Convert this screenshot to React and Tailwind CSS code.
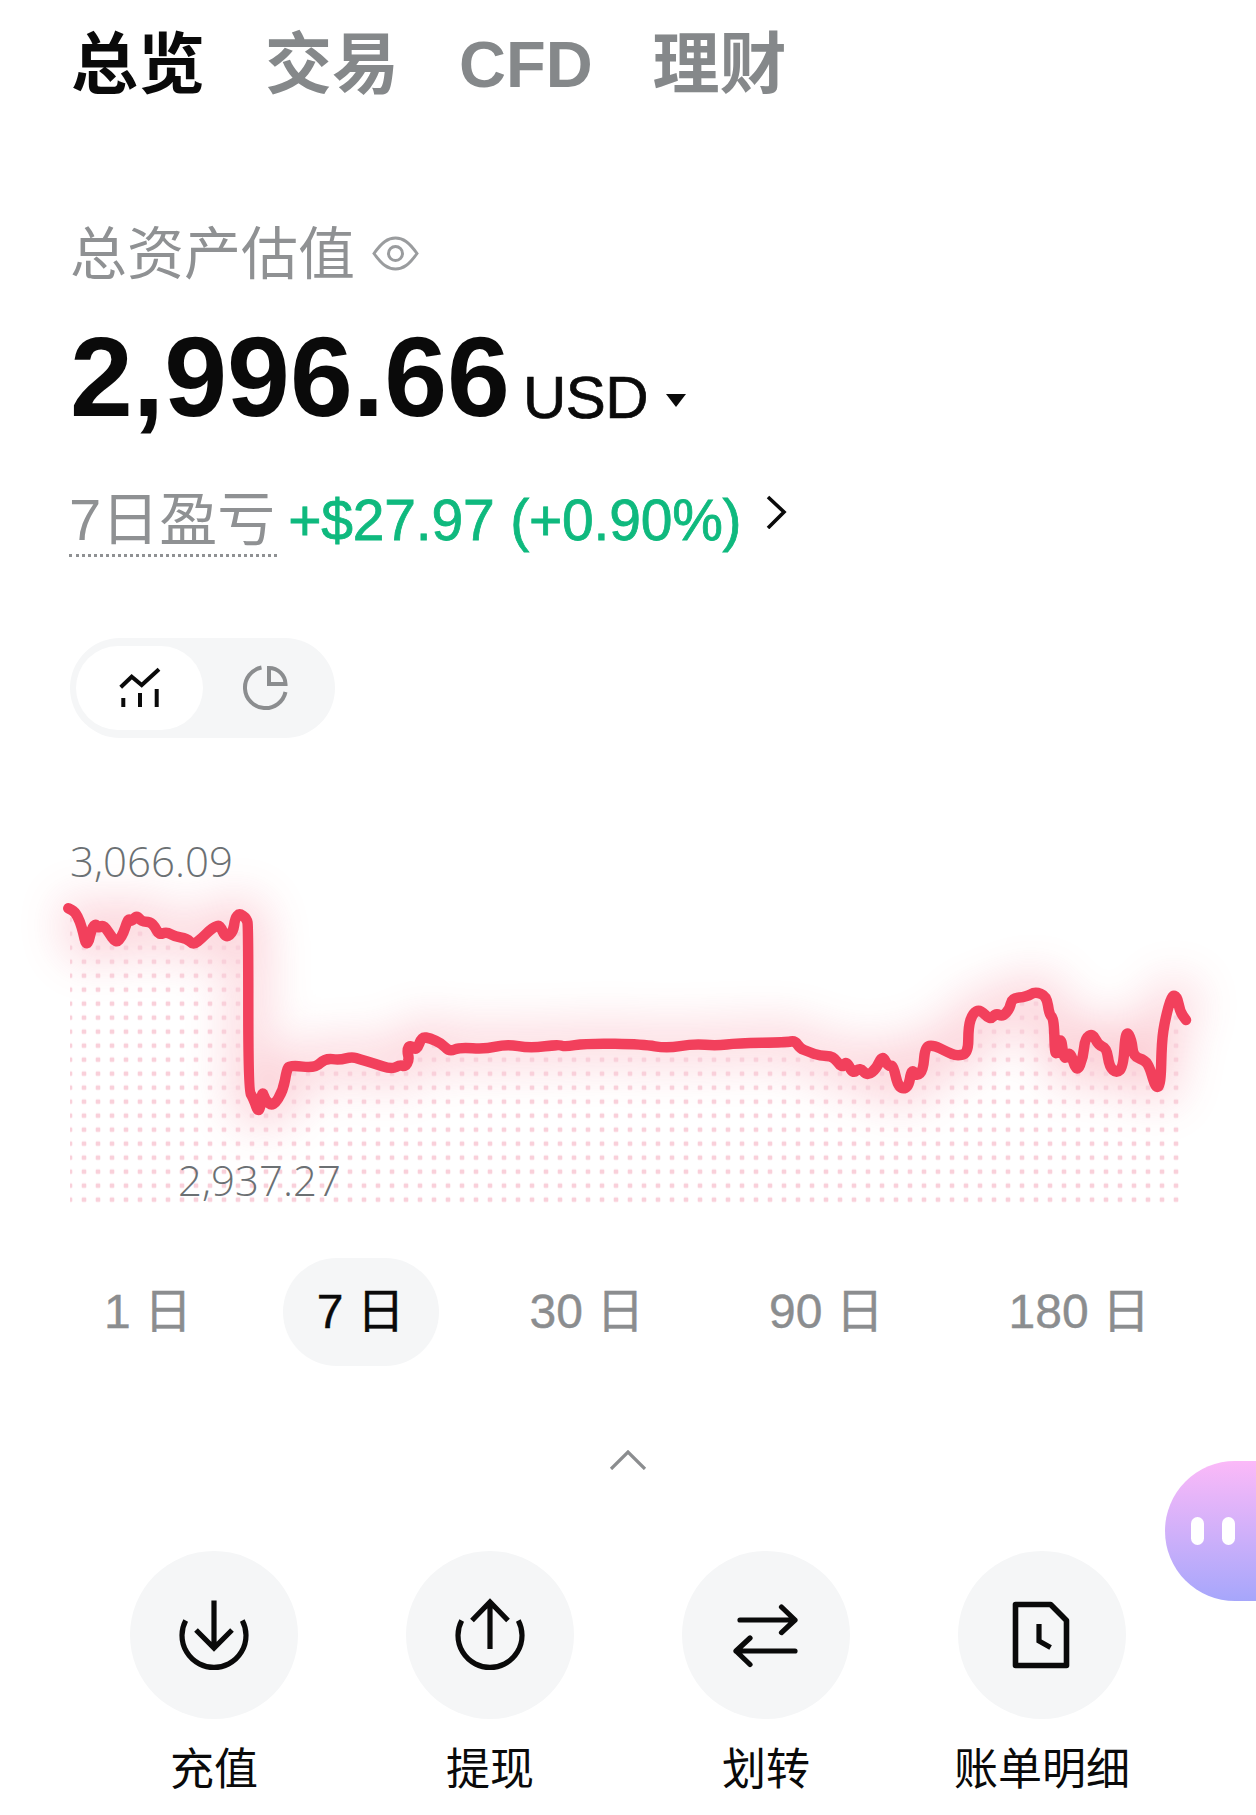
const pts = [[68.3,908.3],[75,911.7],[80,921.7],[83.3,933],[86,945],[89.3,940],[90.7,931.7],[95,923.3],[98.3,928.3],[103.3,925],[108.3,931.7],[116,943.3],[121.7,936.7],[125,928.3],[128.3,918.3],[131.7,921.7],[136.7,915],[141.7,921.7],[150,921.7],[155,926.7],[159,935],[166.7,931.7],[175,936.7],[186.7,938.3],[193.3,945],[201.7,938.3],[210,930],[215,926.7],[220,925],[225.7,938.3],[233.3,931.7],[235,918.3],[239.3,913.3],[246.7,918.3],[248.3,926.7],[248.3,1090],[253.3,1098.3],[259.3,1115],[262.3,1090],[265,1100],[273.3,1106.7],[283.3,1090],[286.7,1070],[290,1065],[315,1068.3],[325,1058.3],[340,1060],[351.7,1056.7],[360,1059.3],[373.3,1063.3],[391.7,1069.3],[400,1065],[405,1066.7],[409.3,1060],[407,1050],[410,1045],[416.7,1050.7],[421.7,1036.7],[430,1038.3],[441.7,1043.3],[449.3,1051.7],[460,1047.3],[485,1049.3],[506.7,1044],[530,1048.3],[560,1044.3],[563,1047],[586.7,1043.3],[643.3,1044.3],[666.7,1048.3],[693.3,1044],[716.7,1045.7],[736.7,1043.3],[786.7,1042.3],[795,1040.7],[800,1048.3],[808.3,1051.7],[820,1056],[833.3,1056],[841.7,1068.3],[846.7,1060.7],[852.7,1074],[860,1067.3],[867.3,1076],[876.7,1068.3],[882.3,1055],[888.3,1066.7],[893.3,1065],[898.3,1088.3],[908.3,1088.3],[911.7,1068.3],[916.7,1076.7],[923.3,1070],[925,1046.7],[933.3,1045],[946.7,1051.7],[956.7,1056],[968.3,1053.3],[968.3,1026.7],[972.7,1013.3],[980,1009.3],[990,1020],[996,1013.3],[1002.7,1016.7],[1010,1008.3],[1011.7,998.3],[1026.7,996.7],[1035,991.7],[1046.7,996],[1049.3,1015],[1054,1018.3],[1055,1061.7],[1060.7,1033.3],[1064,1061.7],[1070,1050],[1076.7,1073.3],[1083.3,1056.7],[1085,1038.3],[1092.7,1033.3],[1098.3,1045],[1106.7,1048.3],[1109.3,1066.7],[1116.7,1073.3],[1123.3,1066.7],[1125.7,1029.3],[1131.7,1040],[1133.3,1056.7],[1145,1060],[1150,1068.3],[1155.7,1088.3],[1160.7,1085],[1161.7,1041.7],[1165,1020],[1171.7,995],[1177.3,996.7],[1180,1011.7],[1186,1020]];
const line = pts.map((p, i) => {
  if (i === 0) return "M" + p[0] + " " + p[1];
  const q = pts[i - 1];
  return "Q" + q[0] + " " + q[1] + " " + (p[0] + q[0]) / 2 + " " + (p[1] + q[1]) / 2;
}).join(" ") + " L1186 1020";
const inner = pts.slice(1, -3).map((p) => "L" + p[0] + " " + p[1]).join(" ");
const area = "M70 1203 L70 909 " + inner + " L1179 1000 L1179 1203 Z";

const font = { fontFamily: '"Liberation Sans","Noto Sans CJK SC",sans-serif' };

function Chart() {
  return (
    <div className="relative mt-[102px] h-[370px] w-full">
      <svg width="1256" height="370" viewBox="0 840 1256 370" className="block overflow-visible">
        <defs>
          <pattern id="dots" patternUnits="userSpaceOnUse" x="77" y="940.67" width="14" height="14">
            <rect x="4.7" y="4.7" width="4.6" height="4.6" rx="1" fill="#f9d0da" />
          </pattern>
          <filter id="glow" filterUnits="userSpaceOnUse" x="0" y="780" width="1256" height="440">
            <feGaussianBlur stdDeviation="24" />
          </filter>
        </defs>
        <path d={line} fill="none" stroke="#f2405c" strokeWidth="30" strokeLinejoin="round" opacity="0.27" filter="url(#glow)" />
        <path d={area} fill="url(#dots)" />
        <path d={line} fill="none" stroke="#f2405c" strokeWidth="10.5" strokeLinejoin="round" strokeLinecap="round" />
      </svg>
      <span className="absolute left-[70px] top-[-4px] text-[42px] leading-[50px] font-light text-[#6b7073] whitespace-nowrap" style={{ fontFamily: '"Open Sans",sans-serif' }}>3,066.09</span>
      <span className="absolute left-[178px] top-[315px] text-[42px] leading-[50px] font-light text-[#6b7073] whitespace-nowrap" style={{ fontFamily: '"Open Sans",sans-serif' }}>2,937.27</span>
    </div>
  );
}

function Action({ label, children }) {
  return (
    <div className="flex w-[168px] flex-col items-center">
      <div className="flex h-[168px] w-[168px] items-center justify-center rounded-full bg-[#f5f6f7]">
        <svg width="80" height="80" viewBox="0 0 80 80" fill="none" stroke="#0a0a0a" strokeWidth="5.2">{children}</svg>
      </div>
      <div className="mt-[29px] whitespace-nowrap text-[44px] leading-[44px] text-[#0a0a0a]">{label}</div>
    </div>
  );
}

function Period({ label, active }) {
  return (
    <div className={active ? "flex h-[108px] items-center rounded-full bg-[#f5f6f7] px-[34px] text-[48px] text-[#0a0a0a] [-webkit-text-stroke:0.4px_#0a0a0a]" : "flex h-[108px] items-center rounded-full px-[34px] text-[48px] text-[#8b8d8f] [-webkit-text-stroke:0.4px_#8b8d8f]"}>
      <span className="whitespace-pre">{label}</span>
    </div>
  );
}

export default function App() {
  return (
    <div className="relative h-[1815px] w-full overflow-hidden bg-white" style={font}>
      <div className="flex h-[66px] items-center gap-[60px] pl-[71px] pt-[32px] text-[67px] font-bold leading-[66px] text-[#85888a] box-content">
        <span className="text-[#0a0a0a]">总览</span>
        <span>交易</span>
        <span className="text-[65px]">CFD</span>
        <span>理财</span>
      </div>

      <div className="mt-[128px] flex h-[56px] items-center pl-[70px] text-[57px] leading-[56px] text-[#8f9193]">
        <span>总资产估值</span>
        <svg width="48" height="36" viewBox="372 235 48 36" fill="none" stroke="#9a9c9e" strokeWidth="3" className="ml-[17px] mt-[-1px]">
          <path d="M374 252.5C382 241 388 237 395.5 237C403 237 409 241 417 252.5C409 264 403 268 395.5 268C388 268 382 264 374 252.5Z" />
          <circle cx="395.5" cy="252.5" r="7" />
        </svg>
      </div>

      <div className="mt-[39px] flex items-baseline pl-[70px] text-[#0a0a0a]">
        <span className="text-[113px] font-bold leading-[112px]">2,996.66</span>
        <span className="relative top-[2px] ml-[13px] text-[60px] leading-[58px] tracking-[-0.5px] [-webkit-text-stroke:0.7px_#0a0a0a]">USD</span>
        <svg width="20" height="13" viewBox="0 0 20 13" className="ml-[18px] self-start mt-[73px]">
          <path d="M0 0H20L10 13Z" fill="#0a0a0a" />
        </svg>
      </div>

      <div className="mt-[59px] flex items-start pl-[69px]">
        <span className="border-b-[3px] border-dotted border-[#8f9193] pb-[6px] pr-[2px] text-[58px] leading-[56px] text-[#8f9193]">7日盈亏</span>
        <span className="ml-[11px] whitespace-nowrap text-[57px] leading-[56px] tracking-[-0.2px] text-[#0fb97e] [-webkit-text-stroke:0.8px_#0fb97e]">+$27.97 (+0.90%)</span>
        <svg width="22" height="34" viewBox="0 0 22 34" fill="none" stroke="#0a0a0a" strokeWidth="3.6" className="ml-[25px] mt-[3px]">
          <path d="M2 2L18 17L2 33" />
        </svg>
      </div>

      <div className="ml-[70px] mt-[81px] flex h-[100px] w-[265px] items-center rounded-full bg-[#f5f6f7] pl-[6px]">
        <div className="flex h-[84px] w-[127px] items-center justify-center rounded-full bg-white">
          <svg width="44" height="42" viewBox="118 667 44 42" fill="none" stroke="#0a0a0a" strokeWidth="4">
            <path d="M120.7 687.3L131.7 676.7L141.7 685L159 669.3" />
            <path d="M123.3 698V707M140 693V707M156.7 689V707" />
          </svg>
        </div>
        <div className="flex w-[124px] items-center justify-center">
          <svg width="48" height="48" viewBox="242 666 48 48" fill="none" stroke="#8b8d8f" strokeWidth="4">
            <path d="M262.5 669.5A20.5 20.5 0 1 0 286.5 694" />
            <path d="M270 670V686H286.5A16.5 16.5 0 0 0 270 670Z" />
          </svg>
        </div>
      </div>

      <Chart />

      <div className="mt-[48px] flex justify-between pl-[70px] pr-[72px]">
        <Period label="1 日" />
        <Period label="7 日" active />
        <Period label="30 日" />
        <Period label="90 日" />
        <Period label="180 日" />
      </div>

      <div className="mt-[84px] flex justify-center">
        <svg width="38" height="20" viewBox="0 0 38 20" fill="none" stroke="#8b8d8f" strokeWidth="3.2">
          <path d="M2 19L19 2L36 19" />
        </svg>
      </div>

      <div className="mt-[81px] flex gap-[108px] pl-[130px]">
        <Action label="充值">
          <path d="M11.7 25.5A32 32 0 1 0 68.3 25.5" />
          <path d="M40 5.4V53M22 35L40 53L58 35" />
        </Action>
        <Action label="提现">
          <path d="M11.7 25.5A32 32 0 1 0 68.3 25.5" />
          <path d="M40 7V54M22 25.5L40 7L58 25.5" />
        </Action>
        <Action label="划转">
          <g strokeLinecap="round" strokeLinejoin="round">
            <path d="M14 25H69M55.5 12L69 25L55.5 37.6" />
            <path d="M69 56H10M24 43L10 56L24 69.5" />
          </g>
        </Action>
        <Action label="账单明细">
          <path d="M13.5 9.5H48.6L64.5 25.5V70.5H13.5Z" strokeWidth="5.6" strokeLinejoin="round" />
          <path d="M37 29V46L48.6 52.5" />
        </Action>
      </div>

      <div className="absolute left-[1165px] top-[1461px] flex h-[140px] w-[160px] items-center gap-[18px] rounded-full bg-gradient-to-b from-[#fbb9f8] to-[#a6a6fb] pl-[26px]">
        <span className="h-[28px] w-[13px] rounded-full bg-white" />
        <span className="h-[28px] w-[13px] rounded-full bg-white" />
      </div>
    </div>
  );
}
